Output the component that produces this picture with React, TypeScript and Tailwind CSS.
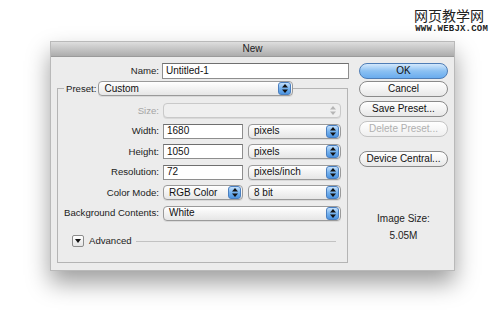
import { type ReactNode } from "react"

const font = { fontFamily: '"Liberation Sans", Arial, sans-serif' }

// little up/down arrows used by the popup menus
function Arrows({ disabled }: { disabled?: boolean }) {
  return (
    <div
      className={
        disabled
          ? "flex h-[13px] w-[13px] items-center justify-center"
          : "flex h-[13px] w-[13px] items-center justify-center rounded-[3px] border border-[#4a7fc0] bg-gradient-to-b from-[#c4e0fb] via-[#75b2ee] to-[#4d94e0]"
      }
    >
      <svg width="6" height="9" viewBox="0 0 6 9">
        <path d="M0 3.5 L3 0 L6 3.5 Z" fill={disabled ? "#b5b5b5" : "#111"} />
        <path d="M0 5.5 L3 9 L6 5.5 Z" fill={disabled ? "#b5b5b5" : "#111"} />
      </svg>
    </div>
  )
}

function Select({ value, w, disabled }: { value?: string; w: string; disabled?: boolean }) {
  return (
    <div
      className={`flex h-[15px] items-center justify-between rounded-[4px] border pl-[5px] pr-[1px] shadow-[0_1px_0_rgba(0,0,0,0.08)] ${
        disabled
          ? "border-[#c9c9c9] bg-[#efefef]"
          : "border-[#9a9a9a] bg-gradient-to-b from-white to-[#e6e6e6]"
      } ${w}`}
    >
      <span className="text-[10px] leading-none text-[#111]">{value}</span>
      <Arrows disabled={disabled} />
    </div>
  )
}

function Input({ value, w }: { value: string; w: string }) {
  return (
    <div
      className={`flex h-[15px] items-center border border-[#8e8e8e] border-t-[#6f6f6f] bg-white pl-[3px] text-[10px] leading-none text-[#111] ${w}`}
    >
      {value}
    </div>
  )
}

function Row({ label, children, muted }: { label: string; children: ReactNode; muted?: boolean }) {
  return (
    <div className="flex h-[15px] items-center">
      <span
        className={`w-[105px] pr-[4px] text-right text-[9.6px] leading-none ${muted ? "text-[#a5a5a5]" : "text-[#222]"}`}
      >
        {label}
      </span>
      {children}
    </div>
  )
}

function Button({ children, kind }: { children: ReactNode; kind?: "ok" | "off" }) {
  const look =
    kind === "ok"
      ? "border-[#4e7db6] bg-gradient-to-b from-[#d3e8fc] via-[#8cc1f2] to-[#6aacee] text-[#111]"
      : kind === "off"
        ? "border-[#c4c4c4] bg-gradient-to-b from-white to-[#efefef] text-[#b0b0b0]"
        : "border-[#8a8a8a] bg-gradient-to-b from-white to-[#e8e8e8] text-[#111]"
  return (
    <div
      className={`flex h-[16px] w-[89px] items-center justify-center rounded-full border text-[10px] leading-none ${look}`}
    >
      {children}
    </div>
  )
}

export default function App() {
  return (
    <div className="h-[336px] w-[500px] overflow-hidden bg-white" style={font}>
      {/* watermark */}
      <div className="flex h-[41px] flex-col items-end pr-[12px] pt-[7px]">
        <div
          className="pr-[4px] text-[14px] leading-[16px] text-[#222]"
          style={{ fontFamily: '"Noto Sans CJK SC", sans-serif' }}
        >
          网页教学网
        </div>
        <div
          className="mt-[1px] text-[9px] font-bold leading-[10px] tracking-[0.2px] text-[#222]"
          style={{ fontFamily: '"Liberation Mono", monospace' }}
        >
          WWW.WEBJX.COM
        </div>
      </div>

      {/* dialog */}
      <div className="ml-[50px] h-[230px] w-[405px] border border-[#b9b9b9] bg-[#ececec] shadow-[0_12px_22px_rgba(0,0,0,0.38)]">
        <div className="flex h-[15px] items-center justify-center border-b border-[#9a9a9a] bg-gradient-to-b from-[#dedede] to-[#acacac] text-[10px] leading-none text-[#222]">
          New
        </div>

        <div className="flex pl-[6px] pt-[6px]">
          {/* left side */}
          <div className="w-[292px]">
            <div className="flex h-[16px] items-center">
              <span className="w-[105px] pr-[3px] text-right text-[9.6px] leading-none text-[#222]">Name:</span>
              <Input value="Untitled-1" w="w-[187px] h-[16px]" />
            </div>

            <div className="mt-[9px] h-[175px] w-[291px] border border-[#b4b4b4]">
              <div className="-mt-[8px] flex h-[15px] items-center">
                <span className="ml-[6px] bg-[#ececec] px-[2px] text-[9.6px] leading-none text-[#222]">Preset:</span>
                <Select value="Custom" w="w-[195px]" />
              </div>

              <div className="mt-[7px] flex flex-col gap-[5.5px]">
                <Row label="Size:" muted>
                  <Select w="w-[178px]" disabled />
                </Row>
                <Row label="Width:">
                  <Input value="1680" w="w-[80px]" />
                  <div className="w-[5px]" />
                  <Select value="pixels" w="w-[93px]" />
                </Row>
                <Row label="Height:">
                  <Input value="1050" w="w-[80px]" />
                  <div className="w-[5px]" />
                  <Select value="pixels" w="w-[93px]" />
                </Row>
                <Row label="Resolution:">
                  <Input value="72" w="w-[80px]" />
                  <div className="w-[5px]" />
                  <Select value="pixels/inch" w="w-[93px]" />
                </Row>
                <Row label="Color Mode:">
                  <Select value="RGB Color" w="w-[80px]" />
                  <div className="w-[5px]" />
                  <Select value="8 bit" w="w-[93px]" />
                </Row>
                <Row label="Background Contents:">
                  <Select value="White" w="w-[178px]" />
                </Row>
              </div>

              <div className="ml-[14px] mt-[14px] flex h-[13px] items-center">
                <div className="flex h-[12px] w-[12px] items-center justify-center rounded-[2px] border border-[#8c8c8c] bg-gradient-to-b from-white to-[#e4e4e4]">
                  <svg width="6" height="4" viewBox="0 0 6 4">
                    <path d="M0 0 L6 0 L3 4 Z" fill="#111" />
                  </svg>
                </div>
                <span className="ml-[5px] text-[9.6px] leading-none text-[#222]">Advanced</span>
                <div className="ml-[4px] h-px w-[200px] bg-[#c2c2c2]" />
              </div>
            </div>
          </div>

          {/* right side */}
          <div className="ml-[10px] flex flex-col">
            <Button kind="ok">OK</Button>
            <div className="mt-[2px]">
              <Button>Cancel</Button>
            </div>
            <div className="mt-[4px]">
              <Button>Save Preset...</Button>
            </div>
            <div className="mt-[4px]">
              <Button kind="off">Delete Preset...</Button>
            </div>
            <div className="mt-[14px]">
              <Button>Device Central...</Button>
            </div>
            <div className="mt-[47px] text-center text-[10px] leading-none text-[#222]">Image Size:</div>
            <div className="mt-[7px] text-center text-[10px] leading-none text-[#222]">5.05M</div>
          </div>
        </div>
      </div>
    </div>
  )
}
